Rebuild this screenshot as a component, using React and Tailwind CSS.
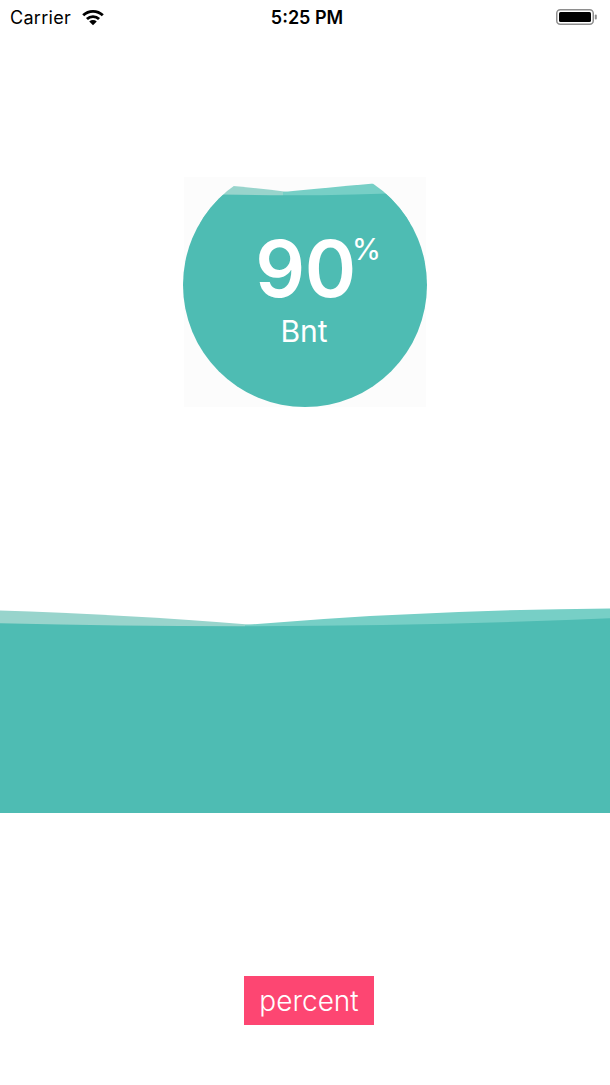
import React from "react";

function Wifi() {
  return (
    <svg width="22" height="16" viewBox="0 0 22 16">
      <path d="M11 15.5 L7.6 12 A5 5 0 0 1 14.4 12 Z" fill="#000" />
      <path d="M4.6 9 A9.2 9.2 0 0 1 17.4 9 L15.6 10.8 A6.6 6.6 0 0 0 6.4 10.8 Z" fill="#000" />
      <path d="M1.2 5.6 A14 14 0 0 1 20.8 5.6 L19 7.4 A11.4 11.4 0 0 0 3 7.4 Z" fill="#000" />
    </svg>
  );
}

function Battery() {
  return (
    <svg width="42" height="16" viewBox="0 0 42 16">
      <rect x="0.75" y="0.75" width="36.5" height="14.5" rx="3.5" fill="none" stroke="#8e8e8e" strokeWidth="1.5" />
      <rect x="3" y="3" width="32" height="10" rx="1.5" fill="#000" />
      <rect x="38.8" y="5.5" width="2" height="5" rx="1" fill="#8e8e8e" />
    </svg>
  );
}

function CircleWave() {
  return (
    <svg width="244" height="244" viewBox="0 0 244 244" className="block">
      <defs>
        <clipPath id="circ">
          <circle cx="122" cy="122" r="122" />
        </clipPath>
      </defs>
      <rect x="1" y="14" width="242" height="230" fill="#fcfcfc" />
      <g clipPath="url(#circ)">
        <path d="M0 20 Q40 21 105 29 L105 60 L0 60 Z" fill="#98d4cc" />
        <path d="M100 29 Q160 23 244 16 L244 60 L100 60 Z" fill="#77cfc6" />
        <path d="M0 30 Q110 35 244 29 L244 244 L0 244 Z" fill="#4ebcb3" />
      </g>
    </svg>
  );
}

function BigWave() {
  return (
    <svg width="610" height="30" viewBox="0 0 610 30" className="block" preserveAspectRatio="none">
      <path d="M0 10.5 Q120 14 255 25 L255 30 L0 30 Z" fill="#98d4cc" />
      <path d="M245 25 Q420 10 610 8.5 L610 30 L245 30 Z" fill="#77cfc6" />
      <path d="M0 23.3 Q320 31 610 18.3 L610 30 L0 30 Z" fill="#4ebcb3" />
    </svg>
  );
}

export default function App() {
  return (
    <div className="w-[610px] h-[1085px] bg-white overflow-hidden" style={{ fontFamily: "Inter, 'Liberation Sans', sans-serif" }}>
      <div className="h-[34px] flex items-center justify-between relative px-[10px]">
        <div className="flex items-center gap-[11px]">
          <span className="text-[18px] text-black tracking-[0.3px]">Carrier</span>
          <div className="scale-110">
            <Wifi />
          </div>
        </div>
        <span className="absolute left-0 right-0 text-center text-[18px] font-semibold text-black pl-[4px]">5:25 PM</span>
        <div className="pr-[2px]">
          <Battery />
        </div>
      </div>
      <div className="mt-[129px] flex justify-center">
        <div className="relative w-[244px] h-[244px]">
          <CircleWave />
          <div className="absolute inset-0 flex flex-col items-center">
            <div className="mt-[67px] relative text-white">
              <span className="block text-[78px] font-semibold leading-none tracking-[-0.5px] pl-[1px]">90</span>
              <span className="absolute left-full top-[-1px] -ml-[4px] text-[30px] font-normal leading-[40px]">%</span>
            </div>
            <span className="text-white text-[30px] leading-[34px] mt-[6px] -ml-[2px]">Bnt</span>
          </div>
        </div>
      </div>
      <div className="mt-[193px]">
        <BigWave />
        <div className="h-[183px] bg-[#4ebcb3]" />
      </div>
      <div className="mt-[163px] flex justify-center pl-[8px]">
        <div className="w-[130px] h-[49px] bg-[#fd4672] flex items-center justify-center">
          <span className="text-white text-[28px] font-light">percent</span>
        </div>
      </div>
    </div>
  );
}
